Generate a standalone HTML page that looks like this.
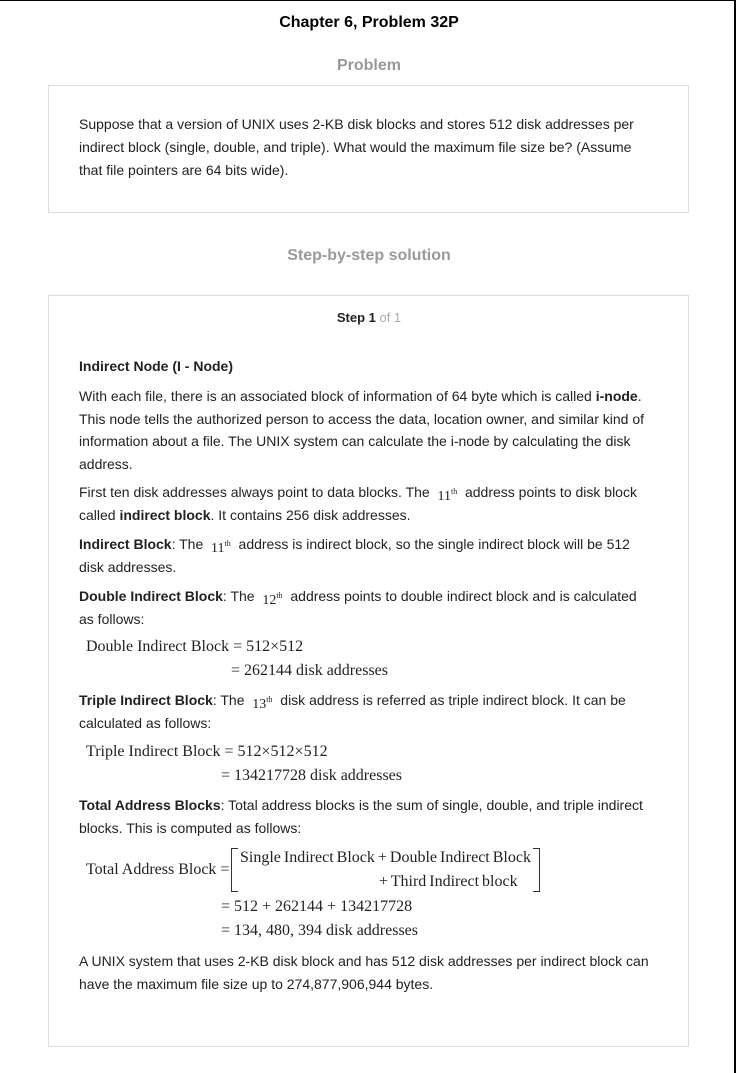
<!DOCTYPE html>
<html><head><meta charset="utf-8"><style>
html,body{margin:0;padding:0;background:#fff}
body{width:738px;height:1073px;position:relative;overflow:hidden;font-family:"Liberation Sans",Arial,sans-serif;color:#222;font-size:14px}
.frame{position:absolute;left:0;top:0;width:736px;height:1073px;border-top:1px solid #000;border-right:2px solid #000;box-sizing:border-box}
.c{position:absolute;left:0;width:738px;text-align:center;font-weight:bold}
.box{position:absolute;left:48px;width:641px;border:1px solid #ddd;box-sizing:border-box}
.t{position:absolute;left:79px;line-height:22.5px;white-space:nowrap;color:#222}
.m{position:absolute;font-family:"Liberation Serif","Times New Roman",serif;font-size:16px;white-space:nowrap;color:#222;line-height:20px}
.s{font-family:"Liberation Serif",serif;font-size:14px;line-height:0;position:relative;top:3px}
sup{font-size:8px;line-height:0;vertical-align:0;position:relative;top:-6px}
</style></head><body>
<div class="frame"></div>
<div class="c" style="top:14px;font-size:16px;color:#000">Chapter 6, Problem 32P</div>
<div class="c" style="top:57px;font-size:16px;color:#999">Problem</div>
<div class="box" style="top:85px;height:128px"></div>
<div class="t" style="top:113px;line-height:23px">Suppose that a version of UNIX uses 2-KB disk blocks and stores 512 disk addresses per<br>indirect block (single, double, and triple). What would the maximum file size be? (Assume<br>that file pointers are 64 bits wide).</div>
<div class="c" style="top:247px;font-size:16px;color:#999">Step-by-step solution</div>
<div class="box" style="top:295px;height:752px"></div>
<div class="c" style="top:310px;font-size:13px;color:#222">Step 1 <span style="font-weight:normal;color:#aaa">of 1</span></div>
<div class="t" style="top:355px;font-weight:bold">Indirect Node (I - Node)</div>
<div class="t" style="top:385px">With each file, there is an associated block of information of 64 byte which is called <b>i-node</b>.<br>This node tells the authorized person to access the data, location owner, and similar kind of<br>information about a file. The UNIX system can calculate the i-node by calculating the disk<br>address.</div>
<div class="t" style="top:481px">First ten disk addresses always point to data blocks. The &nbsp;<span class="s">11<sup>th</sup></span>&nbsp; address points to disk block<br>called <b>indirect block</b>. It contains 256 disk addresses.</div>
<div class="t" style="top:533px"><b>Indirect Block</b>: The &nbsp;<span class="s">11<sup>th</sup></span>&nbsp; address is indirect block, so the single indirect block will be 512<br>disk addresses.</div>
<div class="t" style="top:585px"><b>Double Indirect Block</b>: The &nbsp;<span class="s">12<sup>th</sup></span>&nbsp; address points to double indirect block and is calculated<br>as follows:</div>
<div class="m" style="left:86px;top:637px">Double Indirect Block = 512×512</div>
<div class="m" style="left:231px;top:661px">= 262144 disk addresses</div>
<div class="t" style="top:689px"><b>Triple Indirect Block</b>: The &nbsp;<span class="s">13<sup>th</sup></span>&nbsp; disk address is referred as triple indirect block. It can be<br>calculated as follows:</div>
<div class="m" style="left:86px;top:742px">Triple Indirect Block = 512×512×512</div>
<div class="m" style="left:221px;top:766px">= 134217728 disk addresses</div>
<div class="t" style="top:794px"><b>Total Address Blocks</b>: Total address blocks is the sum of single, double, and triple indirect<br>blocks. This is computed as follows:</div>
<div class="m" style="left:86px;top:860px">Total Address Block =</div>
<div style="position:absolute;left:231px;top:848px;width:6px;height:42px;border:1px solid #333;border-right:none"></div>
<div style="position:absolute;left:533px;top:848px;width:6px;height:42px;border:1px solid #333;border-left:none"></div>
<div class="m" style="left:240px;top:848px;word-spacing:-1px">Single Indirect Block + Double Indirect Block</div>
<div class="m" style="left:379px;top:872px;word-spacing:-1px">+ Third Indirect block</div>
<div class="m" style="left:221px;top:897px">= 512 + 262144 + 134217728</div>
<div class="m" style="left:221px;top:921px">= 134, 480, 394 disk addresses</div>
<div class="t" style="top:950px">A UNIX system that uses 2-KB disk block and has 512 disk addresses per indirect block can<br>have the maximum file size up to 274,877,906,944 bytes.</div>
</body></html>
